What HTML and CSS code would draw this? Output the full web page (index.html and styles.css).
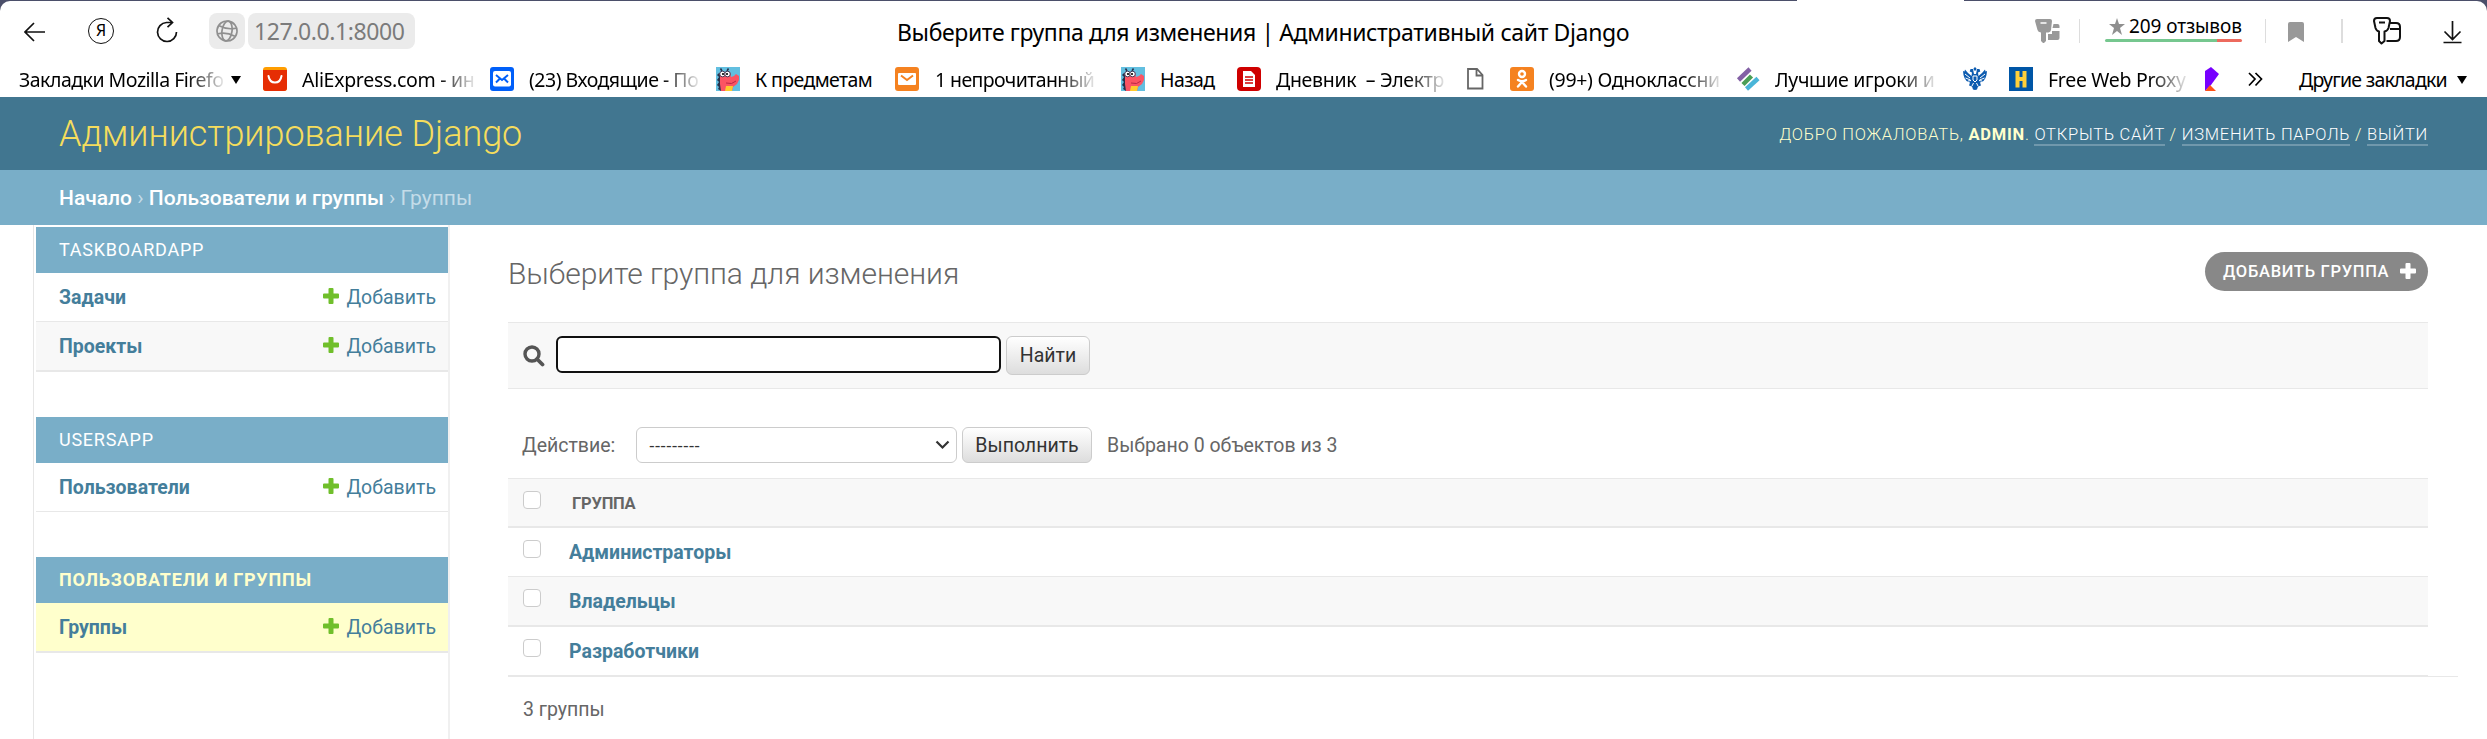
FILE: index.html
```html
<!DOCTYPE html>
<html lang="ru"><head><meta charset="utf-8"><title>Выберите группа для изменения | Административный сайт Django</title>
<link rel="stylesheet" href="styles.css"></head>
<body>
<svg width="0" height="0" class="defs">
<symbol id="plus" viewBox="0 0 16 16"><path d="M6.5 0h3q1 0 1 1v4.500h4.500q1 0 1 1v3q0 1-1 1h-4.500V15q0 1-1 1h-3q-1 0-1-1v-4.500H1q-1 0-1-1v-3q0-1 1-1h4.500V1q0-1 1-1z" fill="currentColor"/></symbol>
<symbol id="dragon" viewBox="0 0 24 24"><path fill="#62bfe0" d="M0 0h24v24H0z"/><path d="M3 6 1 8l2 2-2 3 2 2-2 3 2 2-1 2 3 2V6z" fill="#27304a"/><path d="M4 5h10l1 5 3-1 2-2 3 2v4l-2 4-4 3-1 4H5L4 17z" fill="#fb5463"/><path d="M10 19h7l-1 5H9z" fill="#ffcb2d"/><circle cx="6.500" cy="7" r="2.800" fill="#fff" stroke="#453957"/><circle cx="11.500" cy="7" r="2.800" fill="#fff" stroke="#453957"/><circle cx="7" cy="7" r="1.100"/><circle cx="11" cy="7" r="1.100"/><path d="M4.500 1.500 6 4M12.500 1.500 11 4" stroke="#27304a" stroke-width="1.500"/><path d="M10 16q6 2 10-2" fill="none" stroke="#b92743"/></symbol>
</svg>
<div class="browser">
<div class="tabgap"></div>
<div class="toolbar">
<svg class="back" width="22" height="20" viewBox="0 0 22 20"><path d="M1 10h20M10 1 1 10l9 9" class="ln"/></svg>
<div class="ya">Я</div>
<svg class="reload" width="22" height="26" viewBox="0 0 22 26"><path d="M15.500 5.500H10.500A9.500 9.500 0 1 0 20.500 15M11.500 .800l5 4.700-5 4.700" class="ln"/></svg>
<div class="globe"><svg width="22" height="22" viewBox="0 0 22 22"><g fill="none" stroke="#8f8f8f" stroke-width="1.700" transform="rotate(8 11 11)"><circle cx="11" cy="11" r="10"/><ellipse cx="11" cy="11" rx="5" ry="10"/><path d="M2.500 7q8 3 17 0M2.500 15q8-3 17 0"/></g></svg></div>
<div class="url">127.0.0.1:8000</div>
<div class="ttl">Выберите группа для изменения | Административный сайт Django</div>
<svg class="key" width="26" height="25" viewBox="0 0 26 25"><path d="M2 0h13q2 0 2 2l-1 9q-.5 2-2.500 2.500H11V22l-2 2h-1l-2-2v-8.500q-3-.5-3.500-2.500L0 2q0-2 2-2zM18.500 5h4q2 0 2 2v2h-7zM17 12h7.500v7q0 2-2 2H13v-6h4z" fill="#999"/><path d="M5.500 4h6" stroke="#fff" stroke-width="1.500"/></svg>
<i class="sep s1"></i>
<div class="reviews"><div class="rv"><svg width="16" height="17" viewBox="0 0 16 17"><path d="M8 0l2 6h6l-5 4 2 7-5-4-5 4 2-7-5-4h6z" fill="#8f8f8f"/></svg><span>209 отзывов</span></div><div class="bar"></div></div>
<i class="sep s2"></i>
<svg class="bm" width="16" height="20" viewBox="0 0 16 20"><path d="M2 0h12q2 0 2 2v18l-8-5-8 5V2q0-2 2-2z" fill="#999"/></svg>
<i class="sep s3"></i>
<svg class="key2" width="28" height="28" viewBox="0 0 28 28"><g class="ln2"><path d="M4 1h10q3 0 3 3l-1.500 7q-1 3-4 3.500V24l-3 2.500-2.500-2.500v-9.500q-2.500-.5-3.500-3.500L1 4q0-3 3-3zM6 5.500h6M17.500 6H23q4 0 4 4v10q0 4-4 4h-9.500M17 12h10"/></g></svg>
<svg class="dl" width="19" height="24" viewBox="0 0 19 24"><path d="M9.500 1v18M1.500 11.500l8 8 8-8M.5 22.500h18" class="ln"/></svg>
</div>
<div class="marks">
<b class="m fade n5" style="left:19px">Закладки Mozilla Firefo</b>
<i class="tri" style="left:231px"></i>
<svg style="left:263px" class="ic" viewBox="0 0 24 24"><rect width="24" height="24" rx="3" fill="#ff9d00"/><path d="M0 3h24v18q0 3-3 3H3q-3 0-3-3z" fill="#e62e04"/><path d="M5.500 9q1 6.500 6.500 6.500T18.500 9" fill="none" stroke="#fff" stroke-width="2" stroke-linecap="round"/></svg>
<b class="m fade n3" style="left:302px">AliExpress.com - ин</b>
<svg style="left:490px" class="ic" viewBox="0 0 24 24"><rect width="24" height="24" rx="3" fill="#005ff9"/><rect x="3" y="4" width="18" height="15.500" rx="2" fill="#fff"/><path d="M6 8l6 5 6-5M6 15.500 9.500 12M18 15.500 14.500 12" fill="none" stroke="#005ff9" stroke-width="2"/></svg>
<b class="m fade n5" style="left:529px">(23) Входящие - По</b>
<svg style="left:716px" class="ic"><use href="#dragon"/></svg>
<b class="m n6" style="left:755px">К предметам</b>
<svg style="left:895px" class="ic" viewBox="0 0 24 24"><rect width="24" height="24" rx="3" fill="#f58220"/><rect x="3" y="6" width="18" height="12" rx="1" fill="#fff"/><path d="M6 8.500 12 13l6-4.500" fill="none" stroke="#f58220" stroke-width="2"/></svg>
<b class="m fade n6" style="left:935px">1 непрочитанный</b>
<svg style="left:1121px" class="ic"><use href="#dragon"/></svg>
<b class="m n6" style="left:1160px">Назад</b>
<svg style="left:1237px" class="ic" viewBox="0 0 24 24"><rect width="24" height="24" rx="4" fill="#cf0000"/><path d="M6 4h8l4 4v12H6z" fill="#fff"/><path d="M8 10h8M8 13h8M8 16h8" stroke="#cf0000" stroke-width="1.500"/></svg>
<b class="m fade n3" style="left:1276px">Дневник&nbsp; – Электр</b>
<svg style="left:1463px" class="ic" viewBox="0 0 24 24"><path d="M5 2h9l5.500 6v13.500H5zM13.500 2v6.500h6" fill="none" stroke="#666" stroke-width="1.800"/></svg>
<svg style="left:1510px" class="ic" viewBox="0 0 24 24"><rect width="24" height="24" rx="3" fill="#f58220"/><g fill="none" stroke="#fff" stroke-width="2.400" stroke-linecap="round"><circle cx="12" cy="7" r="3"/><path d="M8 13q4 2.500 8 0M12 15l-4 4.500M12 15l4 4.500"/></g></svg>
<b class="m fade n3" style="left:1549px">(99+) Одноклассни</b>
<svg style="left:1736px" class="ic" viewBox="0 0 24 24"><g stroke-width="4.500"><path d="M2.500 13 14 2" stroke="#8360a5"/><path d="M7 17.500 15.500 9" stroke="#4b9e56"/><path d="M10.500 22 22 11.500" stroke="#49b5d8"/></g></svg>
<b class="m fade n3" style="left:1775px">Лучшие игроки и</b>
<svg style="left:1963px" class="ic" viewBox="0 0 24 24"><path d="M12 0l1.500 1.500-.5 2h-2l-.5-2zM7.500 2l2.500 0 1 5h2l1-5 2.500 0 .8 2.500-2.300 1 .5 3.500L19 6l3-3.500.5 2L24 4l-.5 4-1 3-2 3-3.500 1.500 1 3-3 1-1 3-2 .5-2-.5-1-3-3-1 1-3L3.500 14l-2-3-1-3L0 4l1.500.5.5-2L5 6l3.500 3 .5-3.500-2.300-1z" fill="#0e5cb0"/><path d="M2 7l5 4M2.500 11l5 2M5 14l3-.5M22 7l-5 4M21.500 11l-5 2M19 14l-3-.5M9 19l1.500-3M15 19l-1.500-3" stroke="#fff"/><path d="M10 9h4v4l-2 2-2-2z" fill="none" stroke="#fff"/></svg>
<svg style="left:2009px" class="ic" viewBox="0 0 24 24"><path fill="#0056a6" d="M0 0h24v24H0z"/><path d="M8.500 4v16.500M15.500 4v16.500M8.500 12h7" stroke="#ffd03a" stroke-width="4"/></svg>
<b class="m fade n3" style="left:2048px">Free Web Proxy</b>
<svg style="left:2201px" class="ic" viewBox="0 0 24 24"><path d="M4 4l6-4 8 7-8 11-6 6z" fill="#7700ff"/><path d="M4 24l5-6 6 6z" fill="#ff5316"/></svg>
<svg style="left:2244px" class="ic" viewBox="0 0 24 24"><path d="M5 6l6 6-6 6.500M11.500 6l6 6-6 6.500" fill="none" stroke="#000" stroke-width="1.700"/></svg>
<b class="m n7" style="left:2299px">Другие закладки</b>
<i class="tri" style="left:2457px"></i>
</div>
</div>
<header class="header"><span class="brand">Администрирование Django</span>
<div class="tools">Добро пожаловать, <strong>admin</strong>. <a>Открыть сайт</a> / <a>Изменить пароль</a> / <a>Выйти</a></div></header>
<nav class="crumbs"><b>Начало</b> › <b>Пользователи и группы</b> › Группы</nav>
<div class="page">
<aside class="side">
<section><h2>Taskboardapp</h2>
<div class="row"><b>Задачи</b><a><svg class="pl"><use href="#plus"/></svg><span>Добавить</span></a></div>
<div class="row alt thick"><b>Проекты</b><a><svg class="pl"><use href="#plus"/></svg><span>Добавить</span></a></div></section>
<section><h2>Usersapp</h2>
<div class="row"><b>Пользователи</b><a><svg class="pl"><use href="#plus"/></svg><span>Добавить</span></a></div></section>
<section class="cur"><h2>Пользователи и группы</h2>
<div class="row sel thick"><b>Группы</b><a><svg class="pl"><use href="#plus"/></svg><span>Добавить</span></a></div></section>
</aside>
<main class="main">
<div class="top"><h1>Выберите группа для изменения</h1><a class="addbtn"><span>Добавить группа</span><svg width="16" height="16"><use href="#plus"/></svg></a></div>
<div class="search"><svg width="22" height="22" viewBox="0 0 22 22"><circle cx="9" cy="9" r="7" fill="none" stroke="#555" stroke-width="3.400"/><path d="M14 14l5.500 5.500" stroke="#555" stroke-width="3.800" stroke-linecap="round"/></svg><div class="input"></div><div class="button b1">Найти</div></div>
<div class="actions"><span class="lbl">Действие:</span><div class="select"><span class="dash">---------</span><svg width="15" height="10" viewBox="0 0 15 10"><path d="M1.500 1.500l6 6 6-6" fill="none" stroke="#333" stroke-width="2.200"/></svg></div><div class="button b2">Выполнить</div><span class="cnt">Выбрано 0 объектов из 3</span></div>
<div class="table">
<div class="tr th"><i class="cb"></i><span>Группа</span></div>
<div class="tr"><i class="cb"></i><b>Администраторы</b></div>
<div class="tr alt thick"><i class="cb"></i><b>Владельцы</b></div>
<div class="tr thick last"><i class="cb"></i><b>Разработчики</b></div>
</div>
<div class="pager">3 группы</div>
</main></div>
</body></html>
```
FILE: styles.css
```css
*{box-sizing:border-box}
body{margin:0;height:739px;overflow:hidden;background:#fff;font-family:Roboto,sans-serif;font-size:19.500px;color:#666}
.defs{position:absolute}
svg{display:block;flex:none}
span,b,h1,.tools,.url,.ttl{white-space:nowrap}
.browser{height:97px;background:#4b4f6a;padding-top:1px;position:relative;font-family:"Noto Sans",sans-serif;color:#000}
.browser::before{content:"";position:absolute;inset:1px 0 0;background:#fff;border-radius:10px 10px 0 0}
.tabgap{position:absolute;left:1797px;width:167px;top:0;height:2px;background:#fff}
.toolbar{position:relative;height:60px;display:flex;align-items:flex-start}
.ln,.ln2{fill:none;stroke:#111;stroke-width:1.700}
.ln2{stroke-width:2;stroke-linejoin:round}
.back{margin:21px 0 0 24px}
.ya{margin:17px 0 0 42px;width:26px;height:26px;border:1.500px solid #111;border-radius:50%;font-size:16px;line-height:23px;text-align:center}
.reload{margin:16px 0 0 42px}
.globe{margin:12px 0 0 31px;width:36px;height:36px;border-radius:8px;background:#ebebeb;padding:7px}
.url{margin:12px 0 0 3px;width:167px;height:36px;border-radius:8px;background:#ebebeb;padding-left:6px;font-size:23px;line-height:36px;color:#7b7b7b;letter-spacing:-.4px}
.ttl{margin:13px 0 0 482px;width:738px;font-size:23px;line-height:36px;letter-spacing:-.37px}
.key{margin:18px 0 0 400px}
.sep{width:1px;height:24px;margin-top:18px;background:#ddd}
.s1{margin-left:18px}.s2{margin-left:23px}.s3{margin-left:37px;width:2px}
.reviews{margin:12px 0 0 25px;width:137px}
.rv{display:flex;padding-left:4px;gap:4px;align-items:center;height:26px;font-size:19px;line-height:26px;letter-spacing:-.1px}
.bar{height:3px;border-radius:2px;background:linear-gradient(90deg,#76c78f 82%,#ed6a5e 82%)}
.bm{margin:21px 0 0 22px}
.key2{margin:16px 0 0 30px}
.dl{margin:19px 0 0 42px}
.marks{position:relative;height:36px;font-size:19.500px}
.marks>*{position:absolute}
.marks b{font-weight:400}
.m{top:4px;height:30px;line-height:30px}
.n3{letter-spacing:-.3px}
.n5{letter-spacing:-.5px}
.n6{letter-spacing:-.6px}
.n7{letter-spacing:-.75px}
.fade{-webkit-mask-image:linear-gradient(90deg,#000 calc(100% - 36px),rgba(0,0,0,.1))}
.ic{top:6px;width:24px;height:24px}
.tri{top:15px;border:5px solid transparent;border-top:8px solid #000;border-bottom:0}
.header{height:73px;background:#417690;padding:0 59px;display:flex;justify-content:space-between;align-items:center;font-weight:300;font-size:36px;color:#f5dd5d;line-height:73px}
.brand{padding-top:1px;letter-spacing:-.06px}
.tools{font-size:16.500px;text-transform:uppercase;color:#ffc;font-weight:300;line-height:20px;padding-top:2px;letter-spacing:.75px}
.tools a{color:#fff;border-bottom:2px solid #7098ac}
.tools strong{font-weight:700}
.crumbs{height:55px;background:#79aec8;padding-left:59px;font-size:21px;line-height:56px;color:#c4dce8}
.crumbs b{font-weight:500;color:#fff}
.page{display:flex}
.side{margin-left:33px;width:417px;height:514px;border-left:1px solid #e6e6e6;border-right:2px solid #f0f0f0;padding:2px 0 0 2px}
.side section{margin-bottom:45px}
.side h2{margin:0;height:46px;background:#79aec8;color:#fff;font-size:18px;font-weight:400;line-height:46px;text-transform:uppercase;letter-spacing:.75px;padding-left:23px}
.side .cur h2{color:#ffc;font-weight:700}
.row{display:flex;justify-content:space-between;padding:0 12px 0 23px;height:49px;line-height:50px;border-bottom:1px solid #e8e8e8;color:#447e9b}
.row b,.tr b{font-weight:700;color:#447e9b}
.row a{display:flex;gap:7px}
.pl{width:16px;height:16px;margin-top:15px;color:#70bf2b}
.thick{border-bottom-width:2px!important;height:50px!important}
.alt{background:#f8f8f8}.sel{background:#ffc}
.main{margin-left:58px;width:1920px}
.top{display:flex;justify-content:space-between;height:97px;padding-top:27px}
h1{margin:4px 0 0;font-size:30px;font-weight:300;line-height:36px;letter-spacing:-.05px}
.addbtn{width:223px;height:39px;border-radius:20px;background:#888;color:#fff;display:flex;align-items:center;padding-left:18px;gap:11px;font-size:16.500px;font-weight:500;text-transform:uppercase;letter-spacing:.7px}
.addbtn svg{margin-top:-2px}
.search{height:67px;background:#f8f8f8;border-top:1px solid #e8e8e8;border-bottom:1px solid #e8e8e8;display:flex;padding:13px 0 0 15px}
.search svg{margin-top:9px}
.input{margin-left:11px;width:445px;height:37px;border:2px solid #111;border-radius:6px;background:#fff}
.button{margin-left:5px;border:1px solid #ccc;border-radius:6px;background:linear-gradient(#fff,#ddd);color:#333;display:flex;align-items:center;justify-content:center}
.b1{width:84px;height:39px}
.b2{width:130px;height:36px}
.actions{display:flex;height:89px;padding-top:38px;line-height:37px}
.lbl{padding-left:14px;width:128px}
.select{width:321px;height:36px;border:1px solid #ccc;border-radius:6px;display:flex;align-items:center;justify-content:space-between;padding:0 6px 0 12px;color:#333}
.dash{font-family:"Liberation Sans",sans-serif;font-size:17px}
.cnt{padding-left:15px}
.table{border-top:1px solid #e8e8e8}
.tr{position:relative;display:flex;height:49px;border-bottom:1px solid #e8e8e8;line-height:50px;padding-left:15px}
.tr b{margin-left:28px}
.th{border-bottom-width:2px;background:#f8f8f8;font-size:16.500px;font-weight:700;text-transform:uppercase}
.th span{margin-left:31px;letter-spacing:-.2px}
.last::after{content:"";position:absolute;left:100%;bottom:-2px;width:30px;height:1px;background:#e8e8e8}
.cb{width:18px;height:18px;border:1.500px solid #ccc;border-radius:4px;background:#fff;margin-top:12px}
.pager{padding-left:15px;line-height:66px}
```
